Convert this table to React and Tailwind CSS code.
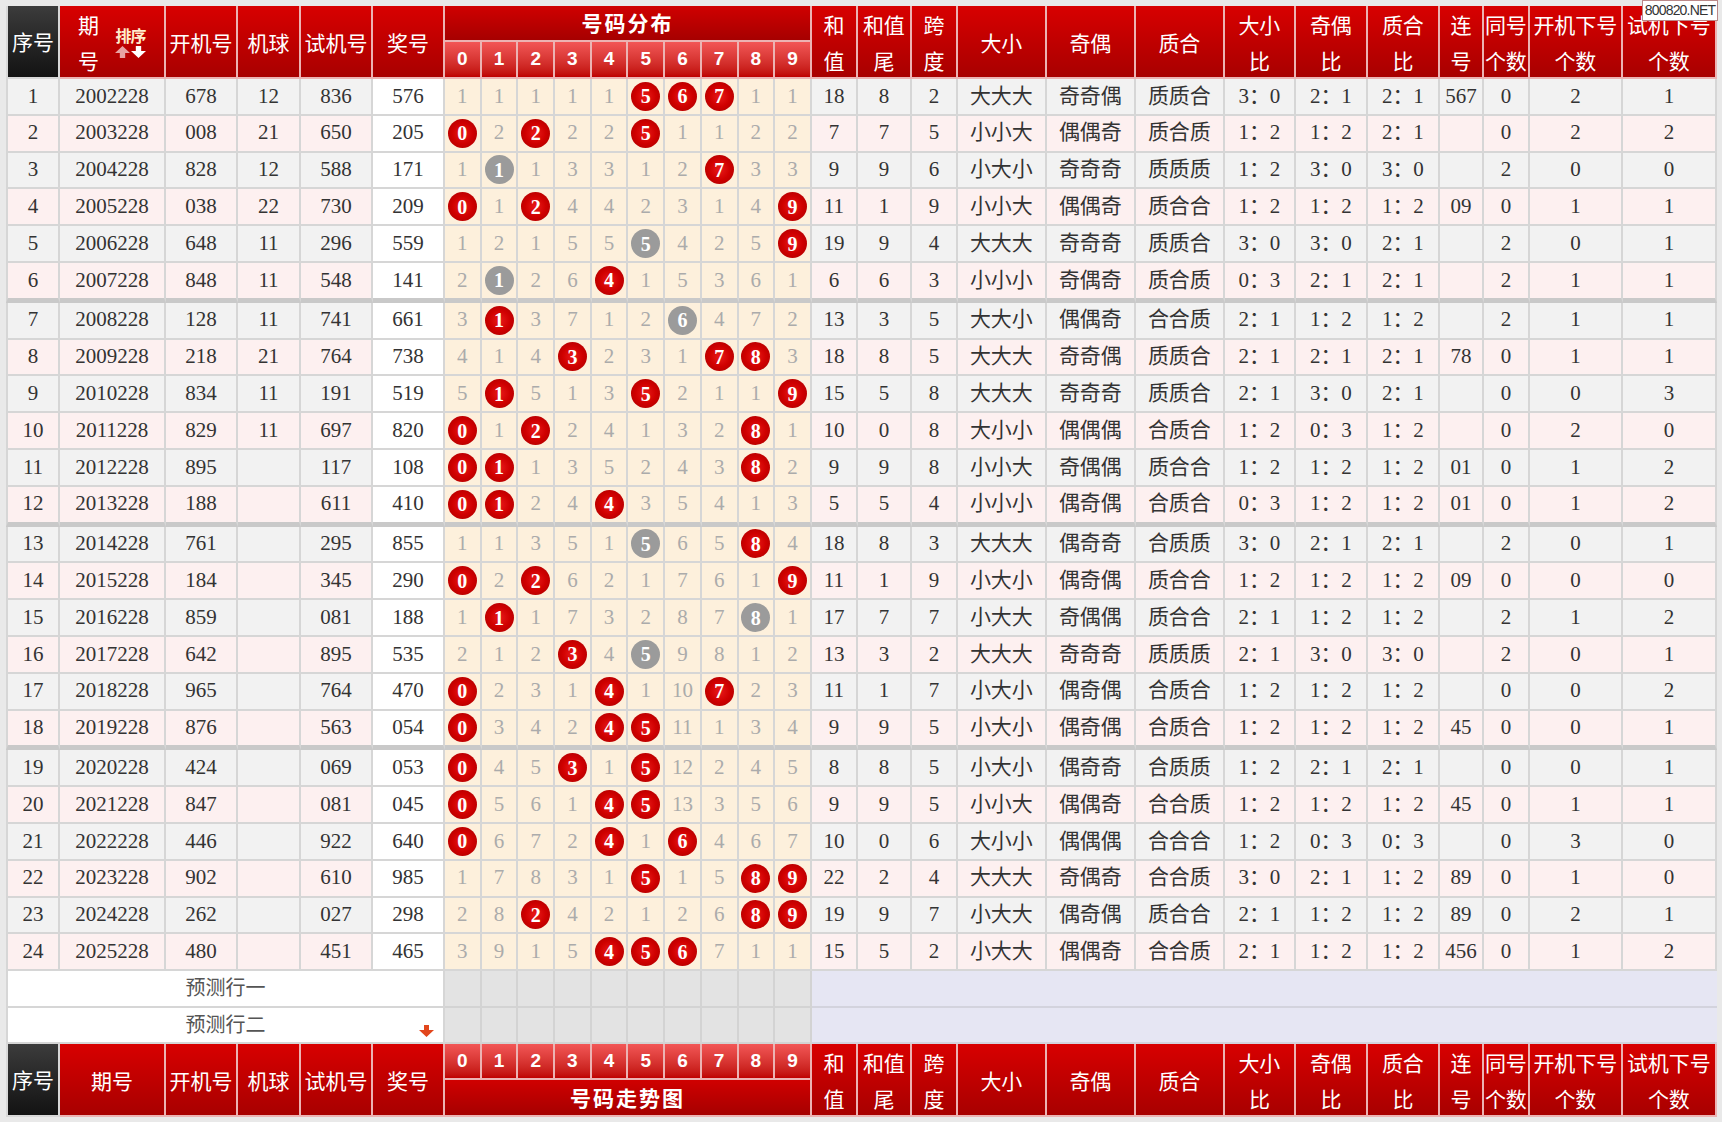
import React from "react";

// shared column template for every band of the table
const GRID =
  "grid grid-cols-[54px_106px_72px_63px_72px_72px_repeat(10,36.7px)_46px_54px_46px_89px_89px_89px_71px_72px_72px_44px_46px_93px_94px]";

const data = [
  ["2002228", "678", "12", "836", "576", "1 1 1 1 1 R R R 1 1", "18", "8", "2", "大大大", "奇奇偶", "质质合", "3：0", "2：1", "2：1", "567", "0", "2", "1"],
  ["2003228", "008", "21", "650", "205", "R 2 R 2 2 R 1 1 2 2", "7", "7", "5", "小小大", "偶偶奇", "质合质", "1：2", "1：2", "2：1", "", "0", "2", "2"],
  ["2004228", "828", "12", "588", "171", "1 G 1 3 3 1 2 R 3 3", "9", "9", "6", "小大小", "奇奇奇", "质质质", "1：2", "3：0", "3：0", "", "2", "0", "0"],
  ["2005228", "038", "22", "730", "209", "R 1 R 4 4 2 3 1 4 R", "11", "1", "9", "小小大", "偶偶奇", "质合合", "1：2", "1：2", "1：2", "09", "0", "1", "1"],
  ["2006228", "648", "11", "296", "559", "1 2 1 5 5 G 4 2 5 R", "19", "9", "4", "大大大", "奇奇奇", "质质合", "3：0", "3：0", "2：1", "", "2", "0", "1"],
  ["2007228", "848", "11", "548", "141", "2 G 2 6 R 1 5 3 6 1", "6", "6", "3", "小小小", "奇偶奇", "质合质", "0：3", "2：1", "2：1", "", "2", "1", "1"],
  ["2008228", "128", "11", "741", "661", "3 R 3 7 1 2 G 4 7 2", "13", "3", "5", "大大小", "偶偶奇", "合合质", "2：1", "1：2", "1：2", "", "2", "1", "1"],
  ["2009228", "218", "21", "764", "738", "4 1 4 R 2 3 1 R R 3", "18", "8", "5", "大大大", "奇奇偶", "质质合", "2：1", "2：1", "2：1", "78", "0", "1", "1"],
  ["2010228", "834", "11", "191", "519", "5 R 5 1 3 R 2 1 1 R", "15", "5", "8", "大大大", "奇奇奇", "质质合", "2：1", "3：0", "2：1", "", "0", "0", "3"],
  ["2011228", "829", "11", "697", "820", "R 1 R 2 4 1 3 2 R 1", "10", "0", "8", "大小小", "偶偶偶", "合质合", "1：2", "0：3", "1：2", "", "0", "2", "0"],
  ["2012228", "895", "", "117", "108", "R R 1 3 5 2 4 3 R 2", "9", "9", "8", "小小大", "奇偶偶", "质合合", "1：2", "1：2", "1：2", "01", "0", "1", "2"],
  ["2013228", "188", "", "611", "410", "R R 2 4 R 3 5 4 1 3", "5", "5", "4", "小小小", "偶奇偶", "合质合", "0：3", "1：2", "1：2", "01", "0", "1", "2"],
  ["2014228", "761", "", "295", "855", "1 1 3 5 1 G 6 5 R 4", "18", "8", "3", "大大大", "偶奇奇", "合质质", "3：0", "2：1", "2：1", "", "2", "0", "1"],
  ["2015228", "184", "", "345", "290", "R 2 R 6 2 1 7 6 1 R", "11", "1", "9", "小大小", "偶奇偶", "质合合", "1：2", "1：2", "1：2", "09", "0", "0", "0"],
  ["2016228", "859", "", "081", "188", "1 R 1 7 3 2 8 7 G 1", "17", "7", "7", "小大大", "奇偶偶", "质合合", "2：1", "1：2", "1：2", "", "2", "1", "2"],
  ["2017228", "642", "", "895", "535", "2 1 2 R 4 G 9 8 1 2", "13", "3", "2", "大大大", "奇奇奇", "质质质", "2：1", "3：0", "3：0", "", "2", "0", "1"],
  ["2018228", "965", "", "764", "470", "R 2 3 1 R 1 10 R 2 3", "11", "1", "7", "小大小", "偶奇偶", "合质合", "1：2", "1：2", "1：2", "", "0", "0", "2"],
  ["2019228", "876", "", "563", "054", "R 3 4 2 R R 11 1 3 4", "9", "9", "5", "小大小", "偶奇偶", "合质合", "1：2", "1：2", "1：2", "45", "0", "0", "1"],
  ["2020228", "424", "", "069", "053", "R 4 5 R 1 R 12 2 4 5", "8", "8", "5", "小大小", "偶奇奇", "合质质", "1：2", "2：1", "2：1", "", "0", "0", "1"],
  ["2021228", "847", "", "081", "045", "R 5 6 1 R R 13 3 5 6", "9", "9", "5", "小小大", "偶偶奇", "合合质", "1：2", "1：2", "1：2", "45", "0", "1", "1"],
  ["2022228", "446", "", "922", "640", "R 6 7 2 R 1 R 4 6 7", "10", "0", "6", "大小小", "偶偶偶", "合合合", "1：2", "0：3", "0：3", "", "0", "3", "0"],
  ["2023228", "902", "", "610", "985", "1 7 8 3 1 R 1 5 R R", "22", "2", "4", "大大大", "奇偶奇", "合合质", "3：0", "2：1", "1：2", "89", "0", "1", "0"],
  ["2024228", "262", "", "027", "298", "2 8 R 4 2 1 2 6 R R", "19", "9", "7", "小大大", "偶奇偶", "质合合", "2：1", "1：2", "1：2", "89", "0", "2", "1"],
  ["2025228", "480", "", "451", "465", "3 9 1 5 R R R 7 1 1", "15", "5", "2", "小大大", "偶偶奇", "合合质", "2：1", "1：2", "1：2", "456", "0", "1", "2"],
];

const rightHeads = [
  ["和", "值"],
  ["和值", "尾"],
  ["跨", "度"],
  ["大小"],
  ["奇偶"],
  ["质合"],
  ["大小", "比"],
  ["奇偶", "比"],
  ["质合", "比"],
  ["连", "号"],
  ["同号", "个数"],
  ["开机下号", "个数"],
  ["试机下号", "个数"],
];

const digits = ["0", "1", "2", "3", "4", "5", "6", "7", "8", "9"];

const RED_TH =
  "row-span-2 flex flex-col items-center justify-center bg-linear-to-b from-[#d80000] to-[#a80000] text-white border-r-2 border-b-2 border-[#ecb3b3] leading-[36px] whitespace-nowrap";
const DIGIT_TH =
  "flex items-center justify-center bg-linear-to-b from-[#f25656] to-[#bf0000] text-white font-bold text-[19px] border-r-2 border-b-2 border-[#ecb3b3] font-['Liberation_Sans',sans-serif]";

function SortIcon() {
  return (
    <div className="flex flex-col items-center">
      <span className="text-[16px] font-bold leading-[18px] text-[#ffeccc] tracking-[-1px]">排序</span>
      <div className="flex items-center gap-[1px] mt-[2px]">
        <svg width="15" height="12" viewBox="0 0 14 11">
          <path d="M7 0l7 6.5H9.5V11h-5V6.5H0z" fill="#e8a3a3" />
        </svg>
        <svg width="15" height="12" viewBox="0 0 14 11">
          <path d="M4.5 0h5v4.5H14L7 11 0 4.5h4.5z" fill="#ffffff" />
        </svg>
      </div>
    </div>
  );
}

function HeadBand({ footer }) {
  const left = ["开机号", "机球", "试机号", "奖号"];
  const digitCells = digits.map((d) => (
    <div key={"d" + d} className={DIGIT_TH}>
      {d}
    </div>
  ));
  const title = (
    <div className="col-span-10 flex items-center justify-center bg-linear-to-b from-[#d00000] to-[#a60000] text-white font-bold text-[21px] tracking-[2px] border-r-2 border-b-2 border-[#ecb3b3]">
      {footer ? "号码走势图" : "号码分布"}
    </div>
  );
  return (
    <div className={`${GRID} grid-rows-[36px_37px]`}>
      <div className="row-span-2 flex items-center justify-center bg-linear-to-b from-[#3c3c3c] to-[#131313] text-white border-l-2 border-r-2 border-b-2 border-[#d8d8d8]">
        序号
      </div>
      {footer ? (
        <div className={RED_TH}>期号</div>
      ) : (
        <div className="row-span-2 flex items-center justify-center gap-[16px] bg-linear-to-b from-[#d80000] to-[#a80000] text-white border-r-2 border-b-2 border-[#ecb3b3]">
          <div className="flex flex-col leading-[36px]">
            <span>期</span>
            <span>号</span>
          </div>
          <SortIcon />
        </div>
      )}
      {left.map((t) => (
        <div key={t} className={RED_TH}>
          {t}
        </div>
      ))}
      {footer ? digitCells : title}
      {rightHeads.map((lines) => (
        <div key={lines.join("")} className={RED_TH}>
          {lines.map((l) => (
            <span key={l}>{l}</span>
          ))}
        </div>
      ))}
      {footer ? title : digitCells}
    </div>
  );
}

function Ball({ n, gray }) {
  return (
    <span
      className={`flex h-[29px] w-[29px] items-center justify-center rounded-full text-white font-bold text-[20px] ${
        gray ? "bg-[#9b9b9b]" : "bg-radial from-[#e81818] via-[#cf0000] to-[#a50000]"
      }`}
    >
      {n}
    </span>
  );
}

function DataRow({ r, i }) {
  const odd = i % 2 === 0;
  const sep = i === 5 || i === 11 || i === 17;
  const side = odd ? "bg-[#f2f2f2]" : "bg-[#fdf0f0]";
  const h = sep ? "h-[39.8px] border-b-[5px] border-b-[#c9c9c9]" : "h-[36.8px] border-b-2";
  const base = `flex items-center justify-center border-r-2 border-[#d6d6d6] whitespace-nowrap ${h}`;
  const left = [String(i + 1), r[0], r[1], r[2], r[3]];
  const dist = r[5].split(" ");
  return (
    <>
      {left.map((v, k) => (
        <div key={"l" + k} className={`${base} ${side} ${k === 0 ? "border-l-2" : ""}`}>
          {v}
        </div>
      ))}
      <div className={`${base} bg-white`}>{r[4]}</div>
      {dist.map((v, k) => (
        <div key={"n" + k} className={`${base} bg-[#fdf0dc]`}>
          {v === "R" ? <Ball n={k} /> : v === "G" ? <Ball n={k} gray /> : <span className="text-[#ababab]">{v}</span>}
        </div>
      ))}
      {r.slice(6).map((v, k) => (
        <div key={"r" + k} className={`${base} ${side}`}>
          {v}
        </div>
      ))}
    </>
  );
}

function ForecastRow({ label, arrow }) {
  return (
    <>
      <div className="col-span-6 relative flex h-[36.5px] items-center justify-center bg-white border-l-2 border-r-2 border-b-2 border-[#d6d6d6] text-[#555] text-[20px]">
        {label}
        {arrow && (
          <svg className="absolute right-[9px] bottom-[5px]" width="15" height="12" viewBox="0 0 15 12">
            <path d="M5 0h5v5h5l-7.5 7L0 5h5z" fill="#e2461c" />
          </svg>
        )}
      </div>
      {digits.map((d) => (
        <div key={d} className="h-[36.5px] bg-[#e3e3e3] border-r-2 border-b-2 border-[#d3d3d3]" />
      ))}
      <div className="col-span-13 h-[36.5px] bg-[#e6e6f3] border-b-2 border-[#d3d3dd]" />
    </>
  );
}

export default function App() {
  return (
    <div className="relative min-h-screen bg-[#e9e9e9] pl-[6px] pt-[6px] font-['Liberation_Serif','Noto_Sans_CJK_SC',serif] text-[21px] text-[#333]">
      <div className="w-[1711px]">
        <div className="font-['Noto_Sans_CJK_SC',sans-serif]">
          <HeadBand />
        </div>
        <div className={GRID}>
          {data.map((r, i) => (
            <DataRow key={r[0]} r={r} i={i} />
          ))}
        </div>
        <div className={GRID}>
          <ForecastRow label="预测行一" />
          <ForecastRow label="预测行二" arrow />
        </div>
        <div className="font-['Noto_Sans_CJK_SC',sans-serif]">
          <HeadBand footer />
        </div>
      </div>
      <div className="absolute right-[4px] top-0 h-[21px] w-[76px] flex items-center justify-center overflow-hidden whitespace-nowrap bg-white border border-[#b88] text-[14px] text-[#333] font-['Liberation_Sans',sans-serif] tracking-[-0.8px]">
        800820.NET
      </div>
    </div>
  );
}
